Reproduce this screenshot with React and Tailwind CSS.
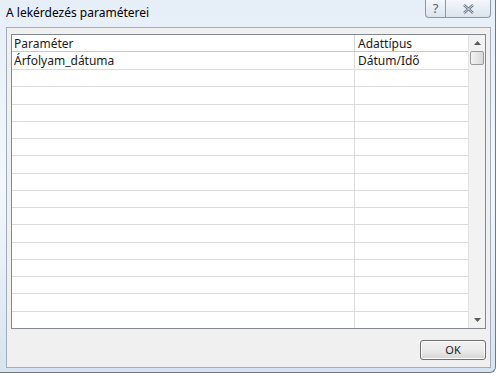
import React from 'react';

const ROWS = 16;

function ScrollBar() {
  return (
    <div className="w-[17px] flex flex-col border-l border-[#e3e3e3] bg-[#f2f2f2]">
      <div className="h-[16px] flex items-center justify-center">
        <svg width="7" height="4" viewBox="0 0 7 4">
          <path d="M0 4 L3.5 0 L7 4 Z" fill="#5a5a5a" />
        </svg>
      </div>
      <div className="mx-[1px] h-[14px] rounded-[2px] border border-[#9a9a9a] bg-gradient-to-r from-[#f3f3f3] to-[#d8d8d8]" />
      <div className="flex-1" />
      <div className="h-[16px] flex items-center justify-center">
        <svg width="7" height="4" viewBox="0 0 7 4">
          <path d="M0 0 L3.5 4 L7 0 Z" fill="#5a5a5a" />
        </svg>
      </div>
    </div>
  );
}

function Grid() {
  const rows = Array.from({ length: ROWS }, (_, i) => i);
  return (
    <div className="h-[295px] flex border border-[#828790] bg-white">
      <div className="flex-1 flex flex-col">
        <div className="h-[17px] flex border-b border-[#c8c8c8] shrink-0">
          <div className="w-[343px] border-r border-[#d5d5d5] pl-[2px] pt-[1px] leading-[16px]">Paraméter</div>
          <div className="flex-1 pl-[3px] pt-[1px] leading-[16px]">Adattípus</div>
        </div>
        <div className="flex-1 flex flex-col">
          {rows.map((i) => (
            <div key={i} className="flex-1 flex border-b border-[#dcdcdc] last:border-b-0">
              <div className="w-[343px] border-r border-[#dcdcdc] pl-[2px] pt-[1px] leading-[16px]">
                {i === 0 ? 'Árfolyam_dátuma' : ''}
              </div>
              <div className="flex-1 pl-[3px] pt-[1px] leading-[16px]">{i === 0 ? 'Dátum/Idő' : ''}</div>
            </div>
          ))}
        </div>
      </div>
      <ScrollBar />
    </div>
  );
}

export default function App() {
  return (
    <div className="w-[500px] h-[374px] overflow-hidden bg-white text-[12px] text-[#1a1a1a] font-['Noto_Sans',sans-serif]">
      <div className="w-[496px] h-[373px] flex flex-col bg-gradient-to-b from-[#e6eef8] via-[#f4f8fc] to-[#d6e4f2] border-r border-b border-[#707a86] rounded-br-[6px]">
        <div className="h-[27px] flex items-start shrink-0">
          <div className="pl-[6px] pt-[5px] leading-[16px] text-black">A lekérdezés paraméterei</div>
          <div className="ml-auto mr-[4px] flex">
            <div className="w-[21px] h-[18px] flex items-center justify-center border border-t-0 border-[#8a98a8] rounded-bl-[4px] bg-gradient-to-b from-[#f4f7fb] to-[#dbe4ee] text-[#56626f] text-[13px] leading-none">
              ?
            </div>
            <div className="w-[45px] h-[18px] flex items-center justify-center border border-t-0 border-l-0 border-[#8a98a8] rounded-br-[4px] bg-gradient-to-b from-[#f4f7fb] to-[#dbe4ee]">
              <svg width="11" height="10" viewBox="0 0 11 10">
                <path d="M1 1 L10 9 M10 1 L1 9" stroke="#6b7785" strokeWidth="2.4" fill="none" />
                <path d="M1 1 L10 9 M10 1 L1 9" stroke="#eef2f6" strokeWidth="0.8" fill="none" />
              </svg>
            </div>
          </div>
        </div>
        <div className="ml-[6px] mr-[4px] mb-[4px] flex-1 flex flex-col bg-[#f0f0f0] border border-[#a3adb8] px-[4px] pt-[6px]">
          <Grid />
          <div className="flex justify-end pt-[11px]">
            <button className="w-[66px] h-[20px] rounded-[3px] border border-[#707070] bg-gradient-to-b from-[#f2f2f2] via-[#ebebeb] to-[#d6d6d6] text-[11px] leading-[18px] text-[#1a1a1a] shadow-[inset_0_0_0_1px_#fcfcfc]">
              OK
            </button>
          </div>
        </div>
      </div>
    </div>
  );
}
